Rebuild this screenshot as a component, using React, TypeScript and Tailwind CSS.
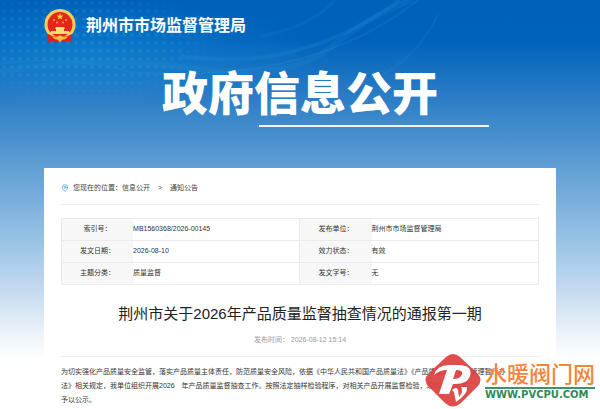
import { MapPin } from 'lucide-react'

const CJK = "font-['Liberation_Sans','Noto_Sans_CJK_SC',sans-serif]"

const rows = [
  ['索引号：', 'MB1560368/2026-00145', '发布单位：', '荆州市市场监督管理局'],
  ['发文日期：', '2026-08-10', '效力状态：', '有效'],
  ['主题分类：', '质量监督', '发文字号：', '无'],
]

const Emblem = () => (
  <svg viewBox="0 0 32 34" className="h-[34px] w-8" aria-hidden="true">
    <ellipse cx="16" cy="15.500" rx="15.500" ry="15.500" fill="#f5cd5a" />
    <ellipse cx="16" cy="15.500" rx="12.500" ry="12.500" fill="#e5261c" />
    <path d="M16 4.200l1 2.200 2.400.2-1.800 1.600.6 2.400L16 9.300l-2.200 1.300.6-2.400-1.800-1.600 2.400-.2z" fill="#f7cf3d" />
    <g fill="#f4b93a">
      <circle cx="10" cy="11" r="0.900" />
      <circle cx="22" cy="11" r="0.900" />
      <circle cx="13" cy="13.500" r="0.900" />
      <circle cx="19" cy="13.500" r="0.900" />
    </g>
    <path d="M11 20l1-2h8l1 2h-1v2h5l1 3H6l1-3h5v-2z" fill="#fbdc7c" />
    <path d="M4 25Q10 29 16 27Q22 29 28 25L27.500 34Q23 31 19.500 33.500L16 31L12.500 33.500Q9 31 4.500 34Z" fill="#dc2219" />
    <path d="M8 27Q12 29 13.500 27.500Q16 25.500 18.500 27.500Q20 29 24 27Q22 31 18.500 30.500L16 33L13.500 30.500Q10 31 8 27Z" fill="#f3bf45" />
  </svg>
)

const Backdrop = () => (
  <svg viewBox="0 0 600 168" preserveAspectRatio="xMinYMin slice" className="absolute left-0 top-0 h-[168px] w-full" aria-hidden="true">
    <defs>
      <pattern id="dots" width="8" height="8" patternUnits="userSpaceOnUse">
        <circle cx="4" cy="3" r="1.900" fill="#2a9fe2" />
      </pattern>
      <radialGradient id="fade" cx="0.350" cy="0.450" r="0.600">
        <stop offset="0" stopColor="#fff" stopOpacity="0.400" />
        <stop offset="0.600" stopColor="#fff" stopOpacity="0.250" />
        <stop offset="1" stopColor="#fff" stopOpacity="0" />
      </radialGradient>
      <radialGradient id="glow" cx="0.500" cy="0.500" r="0.500">
        <stop offset="0" stopColor="#1690da" stopOpacity="0.500" />
        <stop offset="1" stopColor="#1690da" stopOpacity="0" />
      </radialGradient>
      <mask id="dotMask">
        <rect width="230" height="104" fill="url(#fade)" />
      </mask>
    </defs>
    <ellipse cx="90" cy="52" rx="230" ry="52" fill="url(#glow)" />
    <rect width="230" height="104" fill="url(#dots)" mask="url(#dotMask)" />
    <g fill="none" stroke="#2a9be0">
      <path d="M0 72Q90 55 190 68T330 48T412 0" strokeWidth="6" strokeOpacity="0.150" />
      <path d="M180 56Q300 74 400 0" strokeWidth="4" strokeOpacity="0.180" />
      <path d="M0 64Q70 54 130 72Q310 86 418 0" strokeWidth="2" strokeOpacity="0.180" />
      <path d="M380 76Q420 55 438 14" strokeWidth="2" strokeOpacity="0.150" />
      <path d="M260 36Q310 28 335 0" strokeWidth="3" strokeOpacity="0.120" />
    </g>
  </svg>
)

const Watermark = () => (
  <div className="absolute bottom-1 right-[5px] flex items-center">
    <svg viewBox="0 0 56 54" className="h-[54px] w-14 opacity-95" aria-hidden="true">
      <path d="M21 4Q28-2 35 4L52 20Q59 27 52 34L36 50Q28 57 20 50L4 34Q-3 27 4 20Z" fill="#dc4544" />
      <path d="M9 22Q12 12 24 12H35Q48 13 45 23Q42 32 28 31L24 41H14L22 17Q15 17 9 22ZM31 17L28 26Q36 26 37 21Q38 17 31 17Z" fill="#fff" fillRule="evenodd" />
      <path d="M27 37Q32 33 33 37L34 44Q39 38 36 34L42 34Q43 41 31 49L29 39Z" fill="#fff" />
    </svg>
    <div className="ml-1">
      <p className="pb-[3px] font-['Noto_Sans_CJK_SC',sans-serif] text-[22px] font-medium leading-6 text-[#f2853a]">水暖阀门网</p>
      <p className="border-t-2 border-[#3c9269] pt-px font-['DejaVu_Sans',sans-serif] text-[10px] font-bold leading-[10px] text-[#2f8a5c]">WWW.PVCPU.COM</p>
    </div>
  </div>
)

const App: React.FC = () => {
  return (
    <div className={`relative min-h-screen overflow-hidden bg-[linear-gradient(180deg,#0061b8_0px,#0062ba_40px,#5b9bd3_160px,#9cc5e6_245px,#c5daef_290px,#e9f1f9_330px,#ffffff_360px)] ${CJK}`}>
      <Backdrop />
      <header className="relative px-11 pt-[9px]">
        <div className="flex items-center gap-[10px]">
          <Emblem />
          <p className="text-[16px] font-bold leading-6 text-white">荆州市市场监督管理局</p>
        </div>
        <h1 className="mt-[25px] text-center text-[46px] font-black leading-[52px] text-white">政府信息公开</h1>
        <div className="ml-auto mr-[67px] mt-[5px] h-[2px] w-[230px] bg-white/90" />
      </header>

      <main className="relative mx-11 mt-[41px] min-h-[241px] bg-white px-[17px] pb-1 pt-3">
        <nav className="flex h-4 items-center gap-1 text-[7px] text-[#444]">
          <MapPin size={8} className="text-[#2a9bdc]" />
          <span>您现在的位置：<a href="#">信息公开</a></span>
          <span className="px-1">&gt;</span>
          <a href="#">通知公告</a>
        </nav>
        <hr className="mt-2 border-[#ededed]" />

        <table className="mt-[13px] w-full table-fixed border-collapse text-[7px] text-[#333]">
          <colgroup>
            <col className="w-[15%]" />
            <col className="w-[35%]" />
            <col className="w-[15%]" />
            <col className="w-[35%]" />
          </colgroup>
          <tbody>
            {rows.map((row) => (
              <tr key={row[0]} className="h-[22px] border border-[#ebebeb]">
                <th scope="row" className="bg-[#f7f7f7] font-normal">{row[0]}</th>
                <td>{row[1]}</td>
                <th scope="row" className="border-l border-[#ebebeb] bg-[#f7f7f7] font-normal">{row[2]}</th>
                <td>{row[3]}</td>
              </tr>
            ))}
          </tbody>
        </table>

        <h2 className="mt-[19px] text-center text-[15px] leading-5 text-[#222]">荆州市关于2026年产品质量监督抽查情况的通报第一期</h2>
        <p className="mt-2 text-center text-[7px] leading-4 text-[#999]">发布时间： 2026-08-12 15:14</p>
        <hr className="mt-2 border-[#ededed]" />
        <article className="mt-2 text-[7px] leading-[14px] text-[#333]">
          为切实强化产品质量安全监管，落实产品质量主体责任，防范质量安全风险，依据《中华人民共和国产品质量法》《产品质量监督抽查管理暂行办
          <br />
          法》相关规定，我单位组织开展2026　年产品质量监督抽查工作。按照法定抽样检验程序，对相关产品开展监督检验，现将抽查结果
          <br />
          予以公示。
        </article>
      </main>
      <Watermark />
    </div>
  )
}

export default App
